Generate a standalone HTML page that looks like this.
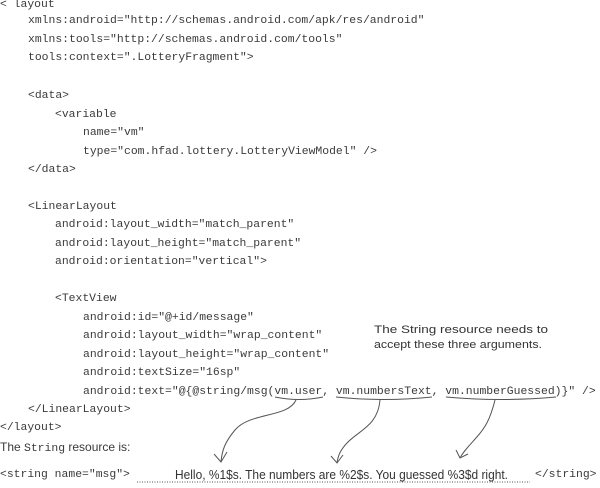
<!DOCTYPE html>
<html><head><style>
html,body{margin:0;padding:0;background:#fff;}
body{width:600px;height:488px;position:relative;overflow:hidden;color:#3a3a3a;}
.l{position:absolute;font-family:"Liberation Mono",monospace;font-size:11.4px;line-height:14px;white-space:pre;}
svg{position:absolute;left:0;top:0;}
</style></head><body>
<div class="l" style="left:0;top:-2px">&lt; layout</div>
<div class="l" style="left:28px;top:14px">xmlns:android="http://schemas.android.com/apk/res/android"</div>
<div class="l" style="left:28px;top:33px">xmlns:tools="http://schemas.android.com/tools"</div>
<div class="l" style="left:28px;top:51px">tools:context=".LotteryFragment"&gt;</div>
<div class="l" style="left:28px;top:89px">&lt;data&gt;</div>
<div class="l" style="left:55px;top:108px">&lt;variable</div>
<div class="l" style="left:83px;top:126px">name="vm"</div>
<div class="l" style="left:83px;top:145px">type="com.hfad.lottery.LotteryViewModel" /&gt;</div>
<div class="l" style="left:28px;top:163px">&lt;/data&gt;</div>
<div class="l" style="left:28px;top:200px">&lt;LinearLayout</div>
<div class="l" style="left:55px;top:218px">android:layout_width="match_parent"</div>
<div class="l" style="left:55px;top:237px">android:layout_height="match_parent"</div>
<div class="l" style="left:55px;top:255px">android:orientation="vertical"&gt;</div>
<div class="l" style="left:55px;top:292px">&lt;TextView</div>
<div class="l" style="left:83px;top:311px">android:id="@+id/message"</div>
<div class="l" style="left:83px;top:329px">android:layout_width="wrap_content"</div>
<div class="l" style="left:83px;top:348px">android:layout_height="wrap_content"</div>
<div class="l" style="left:83px;top:366px">android:textSize="16sp"</div>
<div class="l" style="left:83px;top:385px">android:text="@{@string/msg(vm.user, vm.numbersText, vm.numberGuessed)}" /&gt;</div>
<div class="l" style="left:28px;top:403px">&lt;/LinearLayout&gt;</div>
<div class="l" style="left:0;top:421px">&lt;/layout&gt;</div>
<div class="l" style="left:0;top:440px;font-family:'Liberation Sans',sans-serif;font-size:12px">The <span style="font-family:'Liberation Mono',monospace;font-size:11.4px">String</span> resource is:</div>
<div class="l" style="left:0;top:468px">&lt;string name="msg"&gt;</div>
<div class="l" style="left:535px;top:468px">&lt;/string&gt;</div>
<svg width="600" height="488" viewBox="0 0 600 488">
<g font-family="Liberation Sans Narrow, Liberation Sans, sans-serif" fill="#333" font-size="11">
<text x="374" y="333" textLength="174" lengthAdjust="spacingAndGlyphs">The String resource needs to</text>
<text x="374" y="348" textLength="168" lengthAdjust="spacingAndGlyphs">accept these three arguments.</text>
<text x="175" y="479" font-size="12.5" textLength="333" lengthAdjust="spacingAndGlyphs">Hello, %1$s. The numbers are %2$s. You guessed %3$d right.</text>
</g>
<line x1="137" y1="482" x2="530" y2="482" stroke="#555" stroke-width="1" stroke-dasharray="1,1.5"/>
<g fill="none" stroke="#555" stroke-width="1">
<path d="M275 397 Q299 402 323 397"/>
<path d="M336 397 Q384 402 432 397"/>
<path d="M446 397 Q500 402 556 397"/>
<path d="M296 400 C288 418 250 412 235 430 C225 442 222 450 221 462"/>
<path d="M214 454 L221 462 L227 452"/>
<path d="M380 400 C378 425 360 430 348 442 C340 450 338 456 337 463"/>
<path d="M331 456 L337 463 L343 455"/>
<path d="M495 400 C490 420 485 428 476 438 C468 447 463 452 460 458"/>
<path d="M456 450 L460 458 L468 454"/>
</g>
</svg>
</body></html>
